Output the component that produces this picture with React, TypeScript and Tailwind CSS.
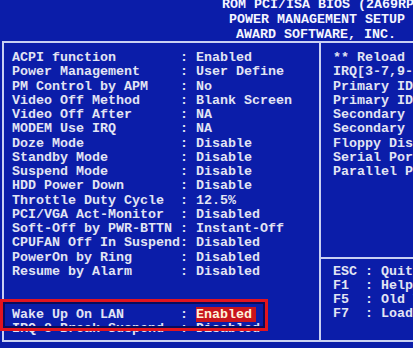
import React from 'react';

const items: [string, string][] = [
  ['ACPI function', 'Enabled'],
  ['Power Management', 'User Define'],
  ['PM Control by APM', 'No'],
  ['Video Off Method', 'Blank Screen'],
  ['Video Off After', 'NA'],
  ['MODEM Use IRQ', 'NA'],
  ['Doze Mode', 'Disable'],
  ['Standby Mode', 'Disable'],
  ['Suspend Mode', 'Disable'],
  ['HDD Power Down', 'Disable'],
  ['Throttle Duty Cycle', '12.5%'],
  ['PCI/VGA Act-Monitor', 'Disabled'],
  ['Soft-Off by PWR-BTTN', 'Instant-Off'],
  ['CPUFAN Off In Suspend', 'Disabled'],
  ['PowerOn by Ring', 'Disabled'],
  ['Resume by Alarm', 'Disabled'],
  ['', ''],
  ['', ''],
  ['Wake Up On LAN', 'Enabled'],
  ['IRQ 8 Break Suspend', 'Disabled'],
];

const events = [
  '** Reload Global Timer Events **',
  'IRQ[3-7,9-15],NMI   : Enabled',
  'Primary IDE 0       : Disabled',
  'Primary IDE 1       : Disabled',
  'Secondary IDE 0     : Disabled',
  'Secondary IDE 1     : Disabled',
  'Floppy Disk         : Disabled',
  'Serial Port         : Enabled',
  'Parallel Port       : Disabled',
];

const keys = [
  'ESC : Quit      \u2191\u2193\u2192\u2190 : Select Item',
  'F1  : Help      PU/PD/+/- : Modify',
  'F5  : Old Values  (Shift)F2 : Color',
  'F7  : Load Setup Defaults',
];

const Row: React.FC<{ name: string; value: string; selected?: boolean }> = ({ name, value, selected }) => {
  if (!name) return <div className="h-[14.25px]" />;
  return (
    <div className="h-[14.25px] leading-[14.25px] whitespace-pre">
      {name.padEnd(21) + ': '}
      {selected ? (
        <span className="bg-[#c8141e] text-[#fff2dc] pr-[4px]">{value}</span>
      ) : (
        value
      )}
    </div>
  );
};

export default function App() {
  return (
    <div className="relative w-[413px] h-[348px] overflow-hidden bg-[#0b1da9] text-[#e2e4f4] font-['Liberation_Mono',monospace] font-bold text-[13.33px]">
      <div className="h-[44px] text-[#f4f5ff] leading-[15px] whitespace-pre">
        <div className="-mt-[3px] pl-[222px]">ROM PCI/ISA BIOS (2A69RPA9)</div>
        <div className="pl-[229px]">POWER MANAGEMENT SETUP</div>
        <div className="pl-[236px]">AWARD SOFTWARE, INC.</div>
      </div>

      <div className="ml-[2px] w-[600px] h-[301px] border-2 border-[#c9d0f2] flex">
        <div className="w-[315px] shrink-0 pt-[8px] pl-[8px]">
          {items.map(([n, v], i) => (
            <Row key={i} name={n} value={v} selected={n === 'Wake Up On LAN'} />
          ))}
        </div>
        <div className="flex-1 border-l-2 border-[#c9d0f2] flex flex-col">
          <div className="h-[216px] border-b-2 border-[#c9d0f2] pt-[8px] pl-[12px]">
            {events.map((t, i) => (
              <div key={i} className="h-[14.25px] leading-[14.25px] whitespace-pre">{t}</div>
            ))}
          </div>
          <div className="pt-[5.5px] pl-[12px]">
            {keys.map((t, i) => (
              <div key={i} className="h-[14.25px] leading-[14.25px] whitespace-pre">{t}</div>
            ))}
          </div>
        </div>
      </div>

      <div className="absolute left-0 top-[299px] w-[268px] h-[32px] border-[3px] border-[#e3141f] shadow-[inset_0_0_0_2px_#0a0c5c]" />
    </div>
  );
}
